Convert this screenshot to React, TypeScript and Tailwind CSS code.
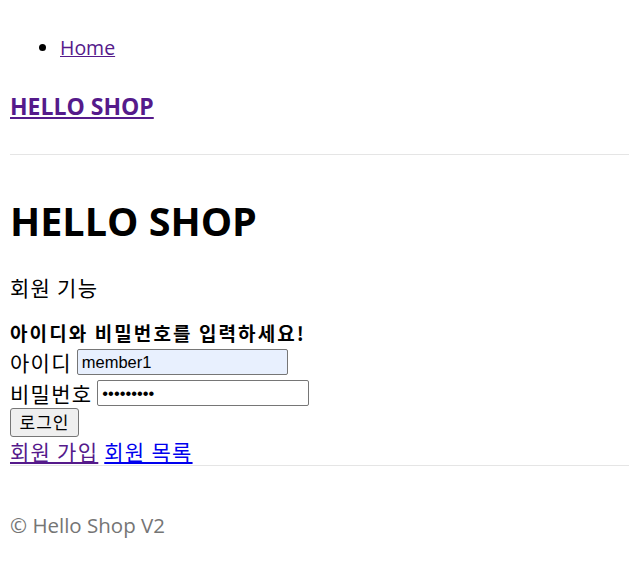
import React from "react";

const font = { fontFamily: '"Open Sans", "Noto Sans CJK KR", sans-serif' };
const ko = { fontFamily: '"Noto Sans CJK KR", "Open Sans", sans-serif' };

export default function App() {
  return (
    <div className="bg-white pl-[10px] text-black text-[20px]" style={{ ...font }}>
      <ul className="mt-[34px] list-disc pl-[50px] leading-[28px]">
        <li>
          <a href="#" className="text-[#551a8b] underline text-[19.5px]">Home</a>
        </li>
      </ul>
      <div className="mt-[28px] text-[23px] font-bold leading-[32px]">
        <a href="#" className="text-[#551a8b] underline">HELLO SHOP</a>
      </div>
      <hr className="mt-[32px] border-t border-[#e5e5e5]" />
      <h1 className="mt-[41px] text-[39.5px] font-bold leading-[50px]">HELLO SHOP</h1>
      <p className="mt-[27px] text-[21px] leading-[28px] tracking-[0.06em]" style={ko}>회원 기능</p>
      <p className="mt-[18px] text-[19px] font-bold leading-[28px] tracking-[0.11em]" style={ko}>
        아이디와 비밀번호를 입력하세요!
      </p>
      <div className="flex h-[30px] items-center">
        <span className="text-[21px] leading-[28px] tracking-[0.06em]" style={ko}>아이디</span>
        <input
          defaultValue="member1"
          className="ml-[5px] h-[26px] w-[211px] rounded-[2px] border border-[#767676] bg-[#e8f0fe] px-[4px] text-[16.5px] text-black"
          style={{ fontFamily: '"Liberation Sans", Arial, sans-serif' }}
        />
      </div>
      <div className="flex h-[30px] items-center pt-[2px]">
        <span className="text-[21px] leading-[28px] tracking-[0.06em]" style={ko}>비밀번호</span>
        <input
          type="password"
          defaultValue="member123"
          className="ml-[5px] h-[26px] w-[212px] rounded-[2px] border border-[#767676] bg-white px-[4px] text-[16.5px] text-black"
          style={{ fontFamily: '"Liberation Sans", Arial, sans-serif' }}
        />
      </div>
      <div>
        <button
          className="h-[29px] w-[69px] rounded-[3px] border border-[#767676] bg-[#efefef] text-[17px] leading-[20px] tracking-[0.06em]"
          style={ko}
        >
          로그인
        </button>
      </div>
      <div className="text-[21px] leading-[28px] tracking-[0.06em]" style={ko}>
        <a href="#" className="text-[#551a8b] underline">회원 가입</a>{" "}
        <a href="#" className="text-[#0000ee] underline">회원 목록</a>
      </div>
      <hr className="border-t border-[#e5e5e5]" />
      <p className="mt-[45px] leading-[28px] text-[#757575] text-[20.5px]">© Hello Shop V2</p>
    </div>
  );
}
